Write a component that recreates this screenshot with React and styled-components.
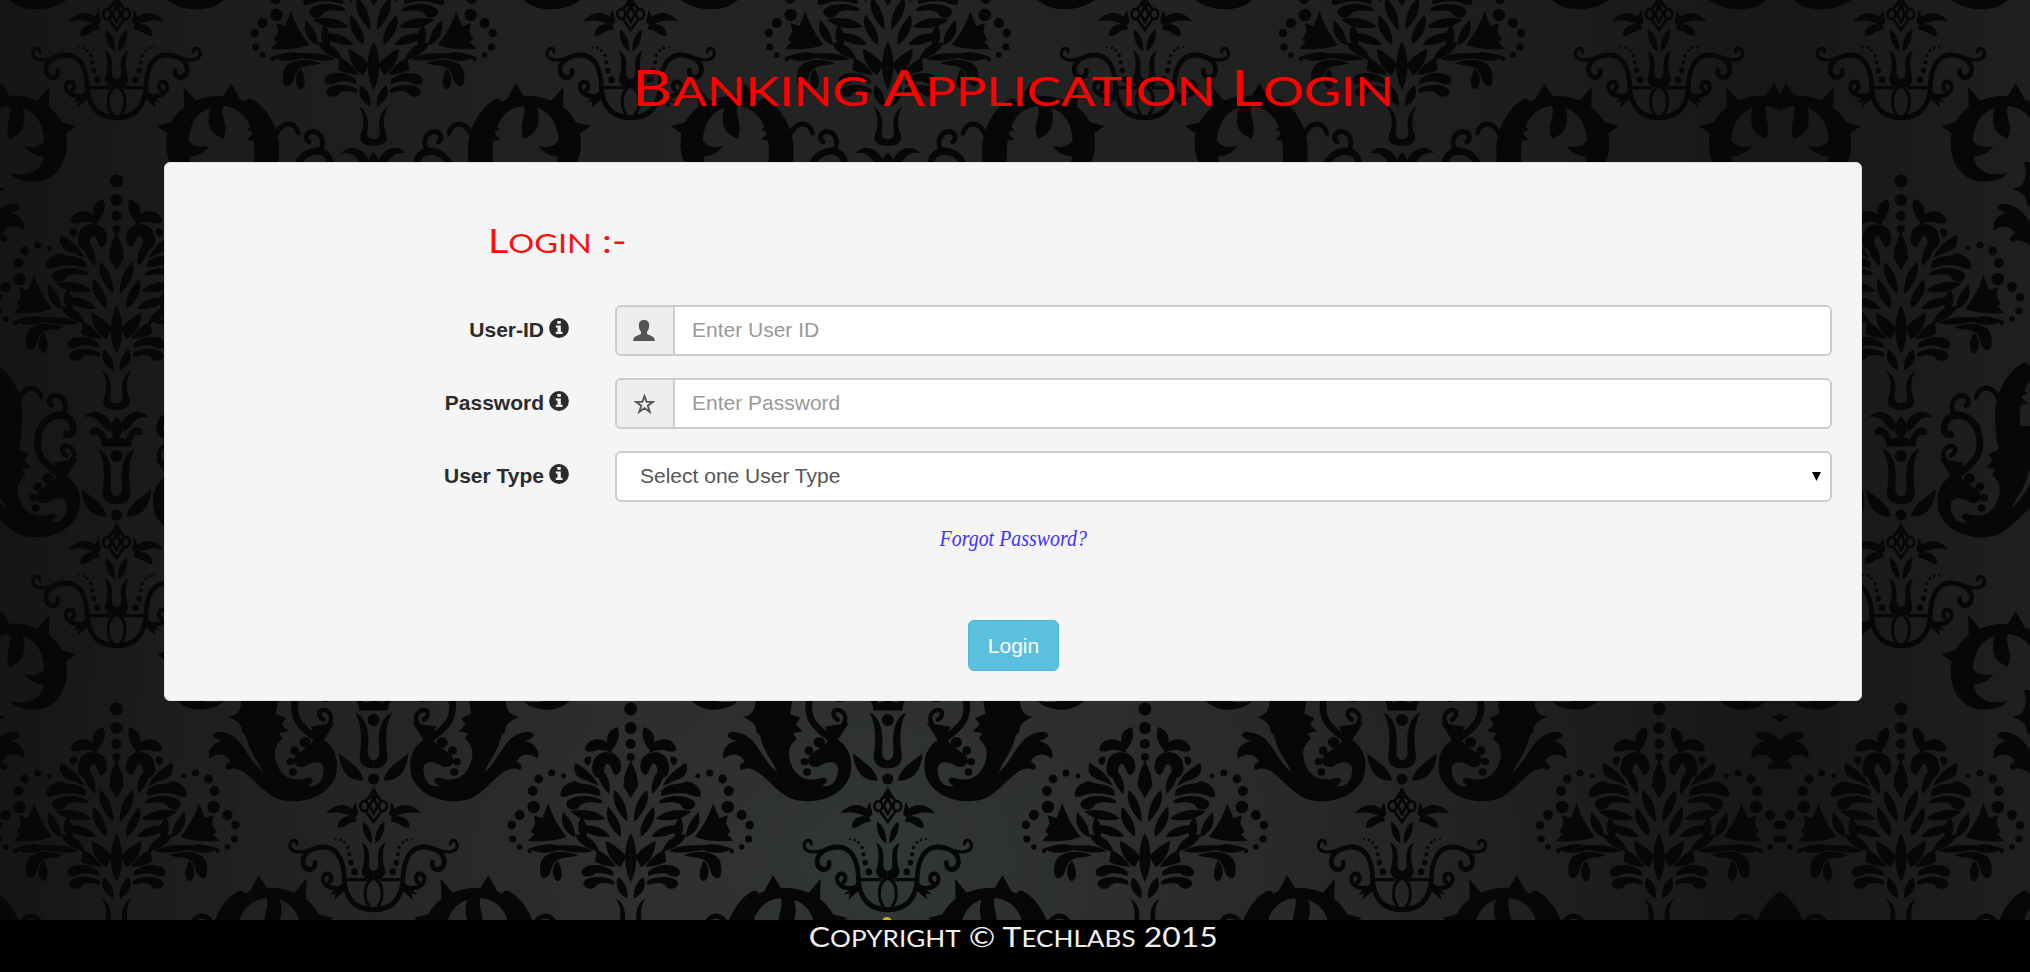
import React from "react";
import styled, { createGlobalStyle } from "styled-components";

const GlobalStyle = createGlobalStyle`
  * { box-sizing: border-box; }
  html, body { margin: 0; padding: 0; background: #1b1b1b; }
  body { font-family: "Liberation Sans", Arial, sans-serif; font-size: 21px; color: #333; }
`;

const Page = styled.div`
  position: relative;
  width: 100%;
  height: 972px;
  overflow: hidden;
  display: flex;
  flex-direction: column;
`;

const Wallpaper = styled.svg`
  position: absolute;
  inset: 0;
  width: 2030px;
  height: 972px;
`;

const Header = styled.header`
  position: relative;
  height: 162px;
  display: flex;
  justify-content: center;
  padding: 57px 0 0 0;
  margin-right: 3px;
`;

const EngravedText = styled.span`
  display: inline-block;
  white-space: pre;
  font-family: Lato, "Liberation Sans", sans-serif;
  font-weight: 400;
  font-size: ${(p) => p.$size}px;
  line-height: 1.2;
  text-transform: uppercase;
  transform: scaleX(${(p) => p.$stretch});
  transform-origin: ${(p) => p.$origin || "center"} center;
`;

const SmallLetters = styled.span`
  font-size: 0.82em;
`;

const Title = styled.h1`
  margin: 0;
  color: #ff0000;
  font-weight: 400;
  font-size: 50px;
  line-height: 1.2;
`;

const Card = styled.main`
  position: relative;
  width: 1698px;
  height: 539px;
  margin-left: 164px;
  background: #f5f5f5;
  border: 1px solid #e3e3e3;
  border-radius: 6px;
  padding: 58px 29px 0 0;
`;

const Legend = styled.h2`
  margin: 0;
  height: 84px;
  padding-left: 323px;
  font-size: 33px;
  font-weight: 400;
  line-height: 1.2;
  color: #ff0d0d;
`;

const Row = styled.div`
  display: grid;
  grid-template-columns: 404px 1fr;
  column-gap: 46px;
  height: 51px;
  margin-bottom: 22px;
`;

const Label = styled.label`
  display: flex;
  justify-content: flex-end;
  gap: 5px;
  padding-top: 13px;
  font-weight: 700;
  line-height: 24px;
  color: #2b2b2b;
`;

const Group = styled.div`
  display: flex;
  border: 2px solid #ccc;
  border-radius: 6px;
  background: #fff;
  overflow: hidden;
`;

const Addon = styled.span`
  width: 58px;
  display: flex;
  align-items: center;
  justify-content: center;
  padding-right: 2px;
  background: #eee;
  border-right: 2px solid #ccc;
`;

const Input = styled.input`
  flex: 1;
  border: 0;
  outline: 0;
  padding: 0 17px 1px;
  font: 21px "Liberation Sans", Arial, sans-serif;
  background: #fff;
  &::placeholder { color: #999; opacity: 1; }
`;

const SelectBox = styled(Group)`
  align-items: center;
  justify-content: space-between;
  padding: 0 9px 1px 23px;
  color: #555;
`;

const Actions = styled.div`
  display: flex;
  flex-direction: column;
  align-items: center;
  padding-left: 30px;
`;

const ForgotLink = styled.a`
  height: 96px;
  font: italic 22.5px/30px "Liberation Serif", "Times New Roman", serif;
  color: #4133ff;
  transform: scaleX(0.885);
`;

const LoginButton = styled.button`
  width: 91px;
  height: 51px;
  border: 1px solid #46b8da;
  border-radius: 6px;
  background: #5bc0de;
  color: #fff;
  font: 21px "Liberation Sans", Arial, sans-serif;
  padding: 0;
`;

const Footer = styled.footer`
  position: absolute;
  left: 0;
  right: 0;
  bottom: 0;
  height: 52px;
  background: #000;
  color: #f0f0f0;
  display: flex;
  justify-content: center;
  padding-top: 1px;
  padding-right: 4px;
`;

function Engraved({ text, size, stretch, origin }) {
  return (
    <EngravedText $size={size} $stretch={stretch} $origin={origin}>
      {text.split(" ").map((word, i) => (
        <React.Fragment key={i}>
          {i > 0 && " "}
          {/^[A-Z]/.test(word) ? (
            <>
              {word[0]}
              <SmallLetters>{word.slice(1)}</SmallLetters>
            </>
          ) : (
            word
          )}
        </React.Fragment>
      ))}
    </EngravedText>
  );
}

const TREE = [
  "M30,112C55,120 62,152 46,182C33,167 22,140 30,112Z",
  "M44,180C50,142 92,136 104,170C110,187 92,188 78,180C64,178 54,184 44,188Z",
  "M24,215C30,182 72,176 84,208C94,236 88,262 72,264C58,260 66,236 56,222C44,216 46,250 34,256C22,248 20,232 24,215Z",
  "M92,200C110,196 112,220 98,226C92,220 90,212 92,200Z",
  "M128,218C134,244 128,262 100,272L74,288C84,256 104,236 128,218Z",
  "M72,232C82,252 70,288 50,312C44,284 54,250 72,232Z",
  "M70,304C84,276 120,286 126,274C150,276 166,300 161,320C146,324 134,308 116,310C98,308 86,314 70,318Z",
  "M66,332C90,308 148,316 149,344C144,364 122,364 116,346C106,332 86,338 66,340Z",
  "M0,210L14,255L17,288L0,324Z",
  "M37,300C46,328 32,366 8,396C6,360 16,322 37,300Z",
  "M58,386C76,362 108,354 140,364C122,388 88,398 58,386Z",
  "M24,440C16,408 38,370 52,350C62,382 46,418 24,440Z",
  "M48,440C60,412 90,400 122,408C102,432 76,444 48,440Z",
  "M190,340L204,384L224,376L220,400L230,426L222,432L237,452C204,456 170,452 148,440C166,412 180,380 190,340Z",
  "M156,366C164,398 152,430 128,442C128,408 140,388 156,366Z",
  "M114,380C126,408 122,438 104,446C96,420 102,396 114,380Z",
  "M72,486C82,450 102,432 128,434C122,460 98,478 72,486Z",
  "M88,484C116,456 160,472 186,462C205,464 222,470 234,476C206,496 186,488 164,480C138,486 112,492 88,484Z",
  "M122,496C150,478 204,480 208,524C212,552 206,572 194,562C180,552 186,520 166,508C150,500 136,504 122,496Z",
  "M168,512C184,528 182,566 168,574C154,566 158,536 168,512Z",
  "M0,430C14,462 20,526 0,576Z",
  "M58,452C56,490 44,516 24,532L10,500C18,486 34,466 58,452Z",
  "M78,480L82,516C62,528 46,530 34,530C44,510 56,492 78,480Z",
  "M40,546C62,516 112,520 114,548C110,566 92,560 80,550C64,548 52,552 40,558Z",
  "M38,574C60,554 112,558 109,584C102,602 84,598 78,584C64,574 50,582 38,584Z",
  "M8,626C4,600 14,576 28,562C40,588 26,614 8,626Z",
  "M34,626C20,650 22,690 30,710C34,738 16,743 0,743L0,724C14,722 17,712 13,690C11,660 18,635 34,626Z",
];

const TREE_DOTS = [
  [67, 248, 2.4], [79, 245, 3.5], [92, 251, 4.4], [98, 263, 5], [97, 279, 6.2],
  [111, 287, 5], [119, 297, 4.2], [118, 311, 3.6], [111, 319, 2.8], [101, 323, 2.2],
];

const VASE = [
  "M0,718C22,735 24,765 0,785Z",
  "M16,738C34,702 72,696 98,720C72,716 56,724 42,746L20,762Z",
  "M28,784C40,740 84,740 78,768C64,774 58,760 46,786Z",
  "M0,776L46,784L43,802L0,802Z",
  "M56,808C36,840 34,880 42,930C42,960 16,964 0,964L0,942C14,940 20,930 16,900C14,860 22,820 56,808Z",
  "M104,922C102,965 78,1002 30,998C38,962 70,950 104,922Z",
  "M0,1016L18,1046L0,1052Z",
  "M46,1092L54,1058L64,1078C88,1058 122,1068 142,1090C112,1086 88,1086 58,1104Z",
  "M52,1106C74,1088 110,1104 108,1130C88,1136 78,1112 52,1114Z",
  "M32,1113C36,1140 22,1166 5,1174C3,1145 14,1124 32,1113Z",
  "M36,1172C22,1200 28,1230 36,1254C28,1276 10,1278 0,1278L0,1252C12,1250 16,1240 13,1215C13,1195 18,1180 36,1172Z",
  "M92,1284L132,1318L114,1314L118,1332L88,1308Z",
  "M355,764C360,800 380,815 402,800L394,864C364,888 330,876 312,840C336,822 350,800 355,764Z",
];

const VASE_LINES = [
  ["M16,1070a12,14 0 1 0 24,0a12,14 0 1 0 -24,0", 8],
  ["M0,1048L12,1070L0,1092M20,1088L0,1114M20,1052L0,1030", 8],
  ["M0,1360C56,1360 82,1330 88,1280C88,1220 110,1180 160,1185C202,1190 218,1215 210,1236C198,1256 172,1248 176,1228", 14],
  ["M196,1194C236,1206 256,1192 250,1174C244,1162 230,1164 230,1176", 9],
  ["M92,1296C144,1310 166,1274 144,1260C126,1256 122,1276 134,1284", 12],
  ["M8,1276C30,1290 30,1330 14,1350M24,1276L84,1276", 9],
];

const VASE_DOTS = [
  [57, 1254, 10], [68, 1228, 8], [73, 1205, 6], [77, 1186, 5], [88, 1172, 4], [99, 1165, 4], [114, 1163, 3],
];

const RING = [
  "M225,520C222,400 260,290 350,287C420,287 478,340 478,430C478,500 445,545 402,545C375,543 355,535 347,518C378,530 420,522 425,470C434,380 410,320 350,318C290,320 264,400 278,520Z",
  "M306,302L328,250L348,292Z",
  "M408,306L438,260L436,335Z",
  "M464,366L500,378L474,402Z",
  "M375,316C388,370 378,402 346,416C332,370 356,350 345,312Z",
  "M432,412C418,444 400,444 380,438C392,462 412,470 434,470Z",
  "M268,360L292,390L276,396L292,420L262,424L268,450L236,470Z",
];

const SCROLL =
  "M236,0L310,0C298,40 308,80 336,80C310,92 300,110 292,150C284,190 264,216 255,248C300,196 300,128 360,125C378,132 368,146 348,152C374,160 384,184 378,206C356,182 336,196 330,216C346,224 342,236 336,240C300,216 270,296 225,325C180,346 110,330 88,260C78,210 90,170 115,150L90,98L145,110C122,160 154,168 176,192C196,218 174,236 160,230C144,214 112,206 115,244C118,284 136,292 152,288C134,274 138,260 154,264C186,278 216,262 226,210C232,180 224,162 210,146L218,130L196,124L212,104L202,84L240,64Z";

const SCROLL_LINES = [
  ["M150,768C118,776 122,714 170,714C240,718 256,810 215,846C200,862 180,876 160,885", 20],
  ["M150,828C170,816 166,796 144,802C116,812 124,850 164,864", 13],
  ["M160,712C142,684 164,656 188,660C206,666 206,682 194,688", 14],
  ["M226,664C236,632 272,626 294,670", 14],
  ["M372,580C330,600 292,660 296,720C296,760 300,800 318,850", 26],
];

function HalfMotif() {
  return (
    <g fill="#060707" stroke="none">
      <g transform="translate(0 162) scale(.4337 .3333)">
        {TREE.map((d) => <path key={d} d={d} />)}
      </g>
      {TREE_DOTS.map(([x, y, r]) => <circle key={x + "-" + y} cx={x} cy={y} r={r} />)}
      <g transform="translate(0 160) scale(.3333 .3571)">
        {VASE.map((d) => <path key={d} d={d} />)}
        {VASE_DOTS.map(([x, y, r]) => <circle key={y} cx={x} cy={y} r={r} />)}
        {[...VASE_LINES, ...SCROLL_LINES].map(([d, w]) => (
          <path key={d} d={d} fill="none" stroke="#060707" strokeWidth={w} strokeLinecap="round" />
        ))}
      </g>
      <g transform="translate(0 264) scale(.4337 .3333)">
        {RING.map((d) => <path key={d} d={d} />)}
      </g>
      <g transform="translate(0 426) scale(.4337 .3333)">
        <path d={SCROLL} />
        <ellipse cx="158" cy="157" rx="13" ry="16" />
        <ellipse cx="182" cy="182" rx="10" ry="13" />
        <ellipse cx="192" cy="215" rx="9" ry="11" />
        <ellipse cx="186" cy="246" rx="9" ry="11" />
      </g>
    </g>
  );
}

function Damask() {
  const spots = [];
  for (let c = -1; c < 8; c++) {
    for (let r = -2; r < 3; r++) {
      spots.push([116.5 + c * 257.1, r * 528 + (c % 2 ? 264 : 0)]);
    }
  }
  return (
    <Wallpaper viewBox="0 0 2030 972" aria-hidden="true">
      <defs>
        <g id="half"><HalfMotif /></g>
        <g id="motif">
          <use href="#half" />
          <use href="#half" transform="scale(-1 1)" />
          <g fill="#060707">
            <circle cy="181" r="6.5" />
            <circle cy="200" r="6" />
            <circle cy="216" r="5" />
            <circle cy="229" r="4" />
            <circle cy="456" r="6" />
            <circle cy="515" r="5.5" />
          </g>
        </g>
        <g id="field">
          {spots.map(([x, y]) => <use key={x + "," + y} href="#motif" x={x} y={y} />)}
        </g>
        <clipPath id="main"><rect width="1780" height="972" /></clipPath>
        <linearGradient id="across">
          <stop offset="0" stopColor="#151515" />
          <stop offset="0.1" stopColor="#1b1c1c" />
          <stop offset="0.3" stopColor="#222222" />
          <stop offset="0.45" stopColor="#232424" />
          <stop offset="0.7" stopColor="#1e1f1f" />
          <stop offset="0.877" stopColor="#171717" />
          <stop offset="1" stopColor="#1e1f1f" />
        </linearGradient>
        <radialGradient id="glow" gradientUnits="userSpaceOnUse" cx="0" cy="0" r="1" gradientTransform="translate(870 860) scale(850 720)">
          <stop offset="0" stopColor="#3a3e3e" stopOpacity="0.7" />
          <stop offset="0.5" stopColor="#343636" stopOpacity="0.4" />
          <stop offset="1" stopColor="#262828" stopOpacity="0" />
        </radialGradient>
      </defs>
      <rect width="2030" height="972" fill="url(#across)" />
      <rect width="2030" height="972" fill="url(#glow)" />
      <g clipPath="url(#main)"><use href="#field" /></g>
      <g transform="translate(3560 0) scale(-1 1)" clipPath="url(#main)"><use href="#field" /></g>
      <circle cx="887" cy="922" r="5" fill="#d4a82e" />
    </Wallpaper>
  );
}

const InfoIcon = () => (
  <svg width="20" height="20" viewBox="0 0 20 20">
    <circle cx="10" cy="10" r="9.9" fill="#2b2b2b" />
    <path d="M8.3 3h3.5v2.7H8.3zM6.8 7.5h5v6.3h1.7V16H6.8v-2.2h1.7V9.6H6.8z" fill="#f5f5f5" />
  </svg>
);

const UserIcon = () => (
  <svg width="22" height="21" viewBox="0 0 22 21">
    <path d="M11 0c3.5 0 5.200 2.100 5.200 5.300 0 2.900-.8 4.900-2.200 6.400v2c1.200 1.500 7.700 2.400 7.700 5.800V21H.3v-1.500c0-3.400 6.500-4.300 7.700-5.800v-2C6.600 10.200 5.800 8.200 5.800 5.300 5.800 2.100 7.500 0 11 0z" fill="#555" />
  </svg>
);

const StarIcon = () => (
  <svg width="21" height="20" viewBox="0 0 21 20">
    <path d="M10.500 2.200l2.100 5.700h6.200l-5 3.800 1.900 6.100-5.200-3.700-5.200 3.700 1.900-6.100-5-3.800h6.200z" fill="none" stroke="#555" strokeWidth="1.900" />
  </svg>
);

function Field({ label, children }) {
  return (
    <Row>
      <Label>
        {label}
        <InfoIcon />
      </Label>
      {children}
    </Row>
  );
}

export default function App() {
  return (
    <Page>
      <GlobalStyle />
      <Damask />
      <Header>
        <Title><Engraved text="Banking Application Login" size={50} stretch={1.24} /></Title>
      </Header>
      <Card>
        <Legend><Engraved text="Login :-" size={33} stretch={1.2} origin="left" /></Legend>
        <Field label="User-ID">
          <Group>
            <Addon><UserIcon /></Addon>
            <Input placeholder="Enter User ID" />
          </Group>
        </Field>
        <Field label="Password">
          <Group>
            <Addon><StarIcon /></Addon>
            <Input type="password" placeholder="Enter Password" />
          </Group>
        </Field>
        <Field label="User Type">
          <SelectBox>
            Select one User Type
            <svg width="9" height="9" viewBox="0 0 9 9"><path d="M0 0h9L4.500 9z" fill="#000" /></svg>
          </SelectBox>
        </Field>
        <Actions>
          <ForgotLink>Forgot Password?</ForgotLink>
          <LoginButton>Login</LoginButton>
        </Actions>
      </Card>
      <Footer><Engraved text="Copyright © Techlabs 2015" size={27} stretch={1.18} /></Footer>
    </Page>
  );
}
